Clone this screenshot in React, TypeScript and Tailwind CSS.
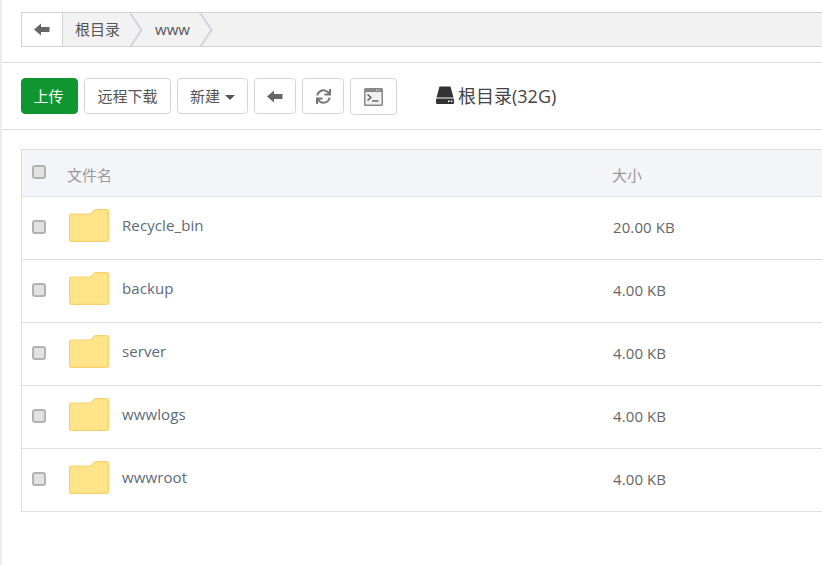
import React from 'react';
import { FaSync } from 'react-icons/fa';

const files = [
  { name: 'Recycle_bin', size: '20.00 KB' },
  { name: 'backup', size: '4.00 KB' },
  { name: 'server', size: '4.00 KB' },
  { name: 'wwwlogs', size: '4.00 KB' },
  { name: 'wwwroot', size: '4.00 KB' },
];

const BackArrow = () => (
  <svg width="16" height="13" viewBox="0 0 16 13" className="block">
    <path d="M0 6.5 L7 0.5 V4 H15.5 V9 H7 V12.5 Z" fill="#666" />
  </svg>
);

const Chevron = () => (
  <svg width="14" height="34" viewBox="0 0 14 34" className="block shrink-0">
    <path d="M0.5 -1 L12.5 17 L0.5 35" fill="none" stroke="#d3d3da" strokeWidth="2" />
  </svg>
);

const Folder = () => (
  <svg width="40" height="33" viewBox="0 0 40 33" className="block shrink-0">
    <path
      d="M2 5 H21 Q22.5 5 23.5 3.7 L24.5 2 Q25.5 0.6 27 0.6 H37.5 Q39.4 0.6 39.4 2.5 V30.5 Q39.4 32.4 37.5 32.4 H2.5 Q0.6 32.4 0.6 30.5 V7 Q0.6 5 2 5 Z"
      fill="#ffe48a"
      stroke="#fad06c"
      strokeWidth="1.2"
    />
  </svg>
);

const Checkbox = () => (
  <div className="w-[14px] h-[14px] rounded-[3px] border-2 border-[#b2b2b2] bg-[#e2e2e2] shrink-0" />
);

const ToolButton = ({ className, children }: { className: string; children: React.ReactNode }) => (
  <button className={`h-9 flex items-center justify-center bg-white border border-[#d4d4d4] rounded text-[#555] text-[15px] ${className}`}>
    {children}
  </button>
);

export default function App() {
  return (
    <div
      className="w-[822px] h-[565px] overflow-hidden bg-white border-l-2 border-[#e8edf1] text-[#666]"
      style={{ fontFamily: '"Open Sans", "Noto Sans CJK SC", sans-serif' }}
    >
      {/* path bar */}
      <div className="h-[63px] pt-3 pl-[19px] border-b border-[#dedede]">
        <div className="w-[830px] h-[35px] flex items-center border border-[#d4d4d4] bg-[#f2f2f2]">
          <div className="w-[41px] h-full flex items-center justify-center bg-white border-r border-[#d4d4d4]">
            <BackArrow />
          </div>
          <span className="ml-3 text-[15px] text-[#555]">根目录</span>
          <div className="ml-[9px]"><Chevron /></div>
          <span className="ml-3 text-[15px] text-[#555]">www</span>
          <div className="ml-[9px]"><Chevron /></div>
        </div>
      </div>

      {/* toolbar */}
      <div className="h-[67px] pt-[15px] pl-[19px] flex items-start border-b border-[#dedede]">
        <ToolButton className="w-[57px] pr-[2px] !bg-[#10962e] !border-[#10962e] !text-white">上传</ToolButton>
        <ToolButton className="w-[87px] ml-[6px]">远程下载</ToolButton>
        <ToolButton className="w-[71px] ml-[6px]">
          新建
          <span className="ml-[5px] mt-[2px] w-0 h-0 border-x-[5px] border-x-transparent border-t-[5px] border-t-[#555]" />
        </ToolButton>
        <ToolButton className="w-[42px] ml-[6px]"><BackArrow /></ToolButton>
        <ToolButton className="w-[42px] ml-[6px]"><FaSync size={15} color="#777" /></ToolButton>
        <ToolButton className="w-[47px] ml-[6px] h-[37px]">
          <svg width="19" height="18" viewBox="0 0 19 18" className="block">
            <rect x="0" y="0" width="19" height="18" rx="1.5" fill="#888" />
            <rect x="1.5" y="4" width="16" height="12.5" fill="#f1f1f1" />
            <rect x="12" y="1.5" width="1.2" height="1.2" fill="#ddd" />
            <rect x="14.2" y="1.5" width="1.2" height="1.2" fill="#ddd" />
            <path d="M3.5 6.5 L7 9.5 L3.5 12.5" fill="none" stroke="#555" strokeWidth="1.3" />
            <path d="M8 13 H14.5" stroke="#555" strokeWidth="1.3" />
          </svg>
        </ToolButton>
        <div className="ml-[39px] h-9 flex items-center text-[#444]">
          <svg width="18" height="18" viewBox="0 0 18 18" className="block mb-[2px]">
            <path d="M3.5 0.5 H14.5 L17.5 11.5 H0.5 Z" fill="#333" />
            <path d="M1 12.5 H17 Q18 12.5 18 13.5 V17 Q18 18 17 18 H1 Q0 18 0 17 V13.5 Q0 12.5 1 12.5 Z" fill="#333" />
            <rect x="12" y="14.5" width="1.6" height="1.6" fill="#fff" />
            <rect x="14.8" y="14.5" width="1.6" height="1.6" fill="#fff" />
          </svg>
          <span className="ml-[4px] text-[18px]">根目录(32G)</span>
        </div>
      </div>

      {/* file table */}
      <div className="mt-[19px] ml-[19px] w-[830px] border border-[#dedede] border-r-0">
        <div className="h-[47px] flex items-center bg-[#f3f5f9] border-b border-[#e2e3e8] text-[15px] text-[#999]">
          <div className="w-[45px] pl-[10px] pb-[2px]"><Checkbox /></div>
          <span className="w-[545px] pt-[5px]">文件名</span>
          <span className="pt-[5px]">大小</span>
        </div>
        {files.map((f, i) => (
          <div
            key={f.name}
            className={`flex items-center text-[15px] tracking-[0.1px] ${i < files.length - 1 ? 'h-[63px] border-b border-[#dedede]' : 'h-[62px]'}`}
          >
            <div className="w-[47px] pl-[10px] pb-[2px]"><Checkbox /></div>
            <div className="pb-[5px]"><Folder /></div>
            <span className="ml-[13px] w-[491px] text-[#5c6b7a] pb-[5px]">{f.name}</span>
            <span className="pb-[2px]">{f.size}</span>
          </div>
        ))}
      </div>
    </div>
  );
}
